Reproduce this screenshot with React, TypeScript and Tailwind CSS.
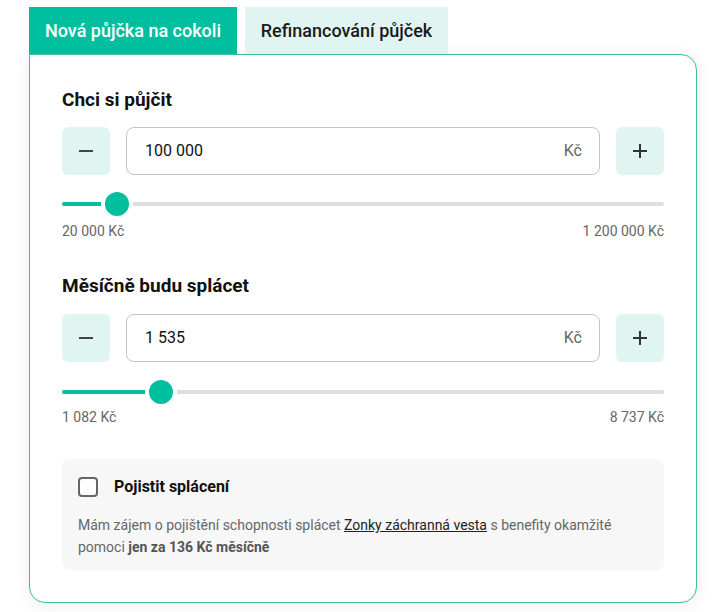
import React from "react";

function Slider({ pos }: { pos: number }) {
  return (
    <div className="relative h-[32px] w-full">
      <div className="absolute left-0 right-0 top-[14px] h-[4px] rounded-full bg-[#dedede]" />
      <div
        className="absolute left-0 top-[14px] h-[4px] rounded-full bg-[#00bf9f]"
        style={{ width: pos }}
      />
      <div
        className="absolute top-0 h-[32px] w-[32px] rounded-full border-[4px] border-white bg-[#00bf9f]"
        style={{ left: pos - 16 }}
      />
    </div>
  );
}

function Stepper({ value }: { value: string }) {
  return (
    <div className="flex h-[48px] gap-4">
      <button className="flex h-[48px] w-[48px] shrink-0 items-center justify-center rounded-[6px] bg-[#e0f5f2]">
        <span className="block h-[2px] w-[14px] bg-[#444]" />
      </button>
      <div className="flex flex-1 items-center justify-between rounded-[8px] border border-[#c4c4c4] pl-[18px] pr-[17px] text-[16px] text-[#111]">
        <span>{value}</span>
        <span className="text-[#666]">Kč</span>
      </div>
      <button className="relative flex h-[48px] w-[48px] shrink-0 items-center justify-center rounded-[6px] bg-[#e0f5f2]">
        <span className="block h-[2px] w-[14px] bg-[#333]" />
        <span className="absolute block h-[14px] w-[2px] bg-[#333]" />
      </button>
    </div>
  );
}

export default function App() {
  return (
    <div
      className="min-h-[612px] w-[718px] bg-white pl-[29px] pt-[7px]"
      style={{ fontFamily: "Roboto, 'Noto Sans', sans-serif" }}
    >
      <div className="flex gap-2">
        <div className="flex h-[47px] w-[208px] items-center justify-center bg-[#00bf9f] text-[18px] font-medium text-white">
          Nová půjčka na cokoli
        </div>
        <div className="flex h-[47px] w-[203px] items-center justify-center bg-[#e0f5f2] text-[18px] font-medium text-[#1a1a1a]">
          Refinancování půjček
        </div>
      </div>
      <div className="w-[668px] rounded-b-[16px] rounded-tr-[16px] border border-[#3dbd98] bg-white px-[32px] pb-[32px] pt-[33px] shadow-[0_2px_16px_rgba(0,0,0,0.08)]">
        <h2 className="h-[24px] text-[19px] font-bold leading-[24px] text-[#111]">Chci si půjčit</h2>
        <div className="mt-[15px]">
          <Stepper value="100 000" />
        </div>
        <div className="mt-[13px]">
          <Slider pos={55} />
        </div>
        <div className="mt-[1px] flex h-[20px] justify-between text-[14px] leading-[20px] text-[#666]">
          <span>20 000 Kč</span>
          <span>1 200 000 Kč</span>
        </div>

        <h2 className="mt-[33px] h-[24px] text-[19px] font-bold leading-[24px] text-[#111]">Měsíčně budu splácet</h2>
        <div className="mt-[16px]">
          <Stepper value="1 535" />
        </div>
        <div className="mt-[14px]">
          <Slider pos={99} />
        </div>
        <div className="-mt-[1px] flex h-[20px] justify-between text-[14px] leading-[20px] text-[#666]">
          <span>1 082 Kč</span>
          <span>8 737 Kč</span>
        </div>

        <div className="mt-[32px] rounded-[8px] bg-[#f7f7f7] px-4 pb-[12px] pt-4">
          <div className="flex items-center gap-4">
            <span className="block h-[20px] w-[20px] rounded-[4px] border-2 border-[#666] bg-white" />
            <span className="text-[16px] font-bold text-[#111]">Pojistit splácení</span>
          </div>
          <p className="mt-[15px] text-[14px] leading-[22px] text-[#666]">
            Mám zájem o pojištění schopnosti splácet{" "}
            <span className="text-[#222] underline">Zonky záchranná vesta</span> s benefity okamžité pomoci{" "}
            <span className="font-bold text-[#555]">jen za 136 Kč měsíčně</span>
          </p>
        </div>
      </div>
    </div>
  );
}
